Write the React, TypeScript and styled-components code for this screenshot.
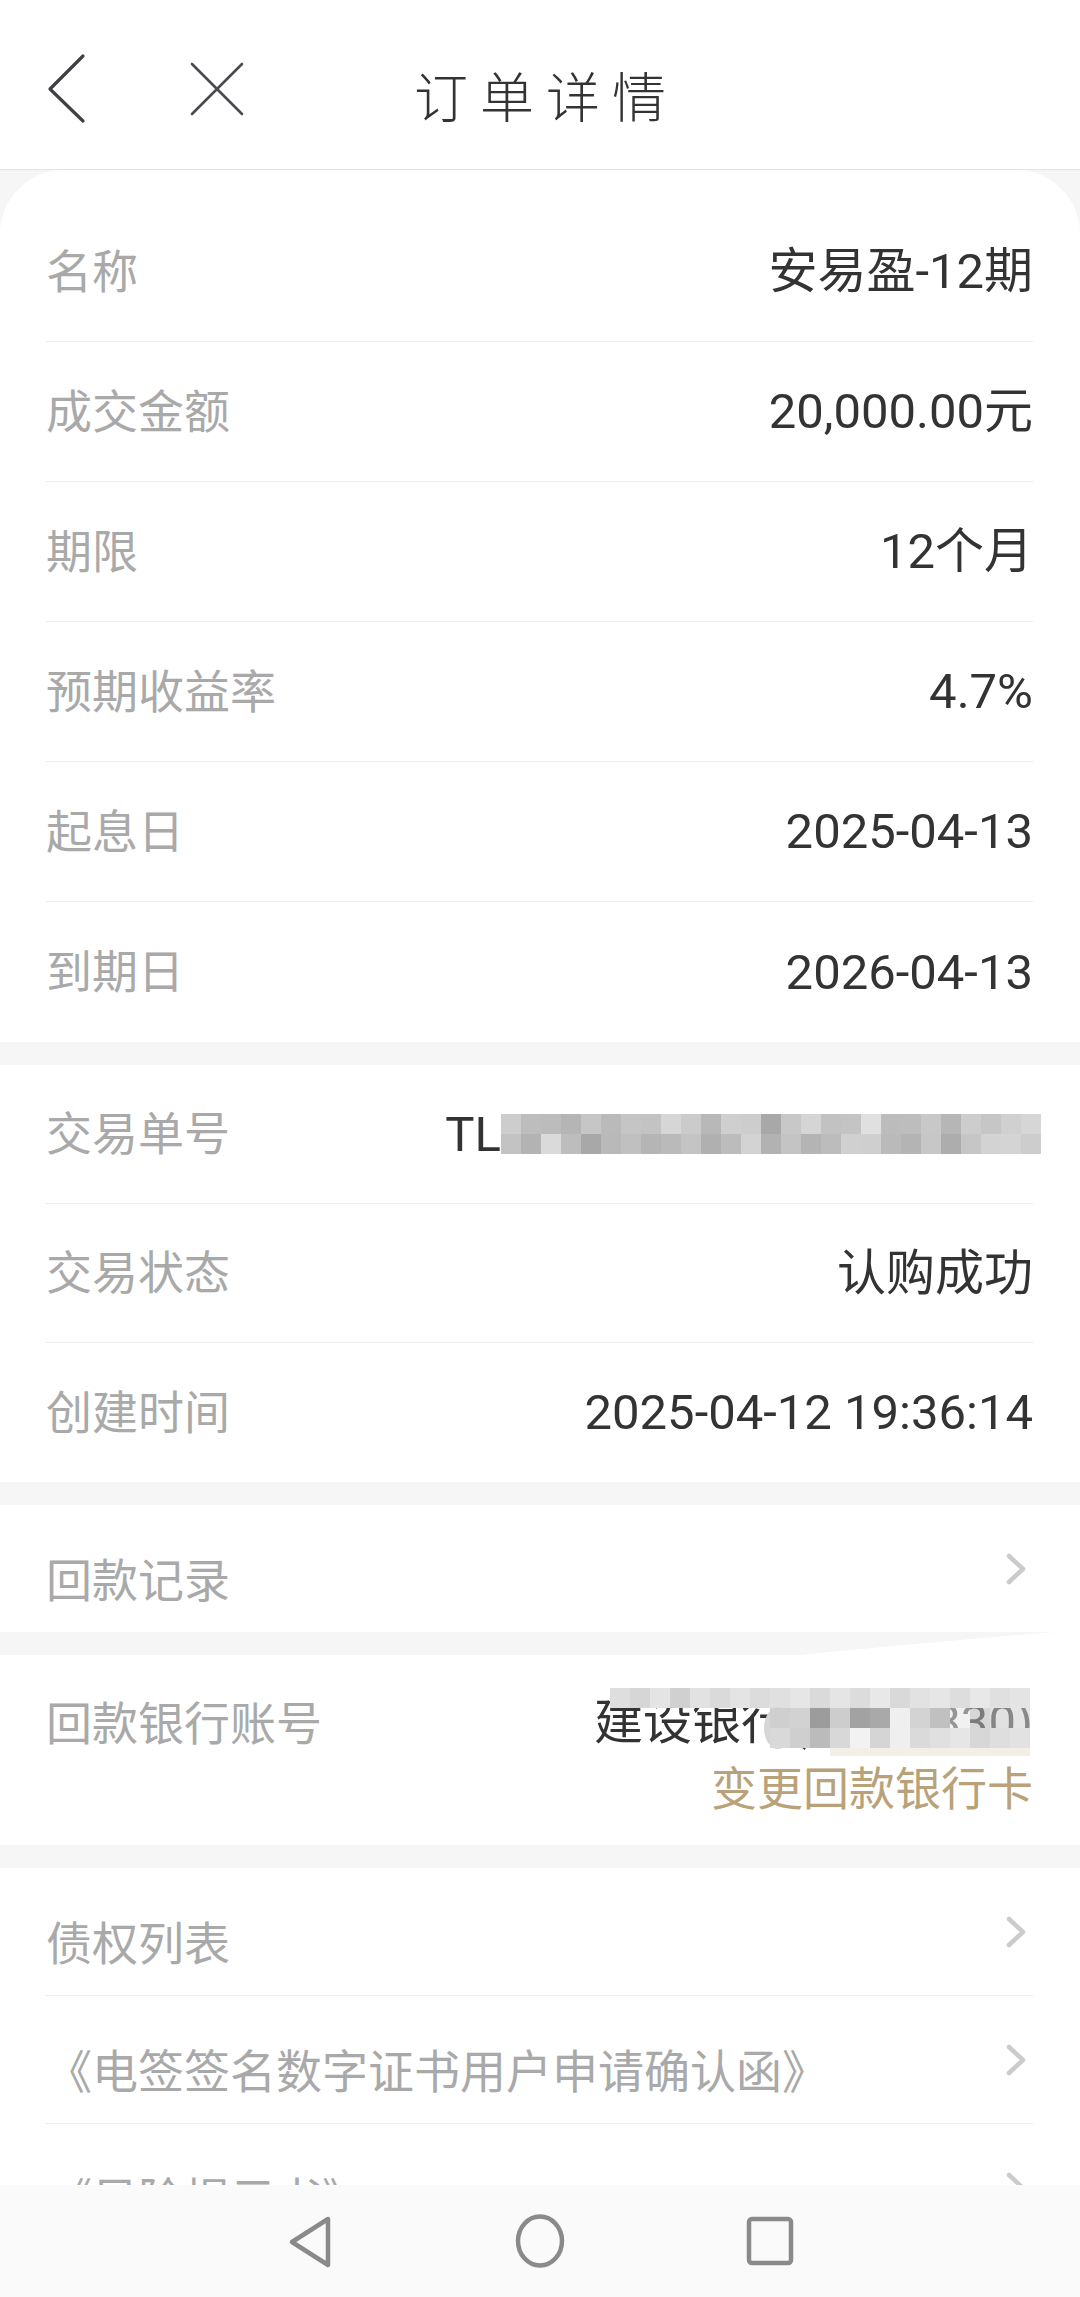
import React from 'react';
import styled, { createGlobalStyle } from 'styled-components';

const GlobalStyle = createGlobalStyle`
	html, body {
		margin: 0;
		padding: 0;
		background: #f6f6f6;
	}
	body {
		font-family: 'Noto Sans CJK SC', sans-serif;
	}
	* {
		box-sizing: border-box;
	}
`;

const Screen = styled.div`
	width: 1080px;
	height: 2297px;
	display: flex;
	flex-direction: column;
	overflow: hidden;
	background: #f6f6f6;
`;

const Header = styled.header`
	flex: none;
	height: 170px;
	background: #fff;
	border-bottom: 1px solid #e3e3e3;
	display: grid;
	grid-template-columns: 1fr auto 1fr;
	align-items: center;
`;

const HeaderLeft = styled.div`
	display: flex;
	align-items: center;
	gap: 99px;
	padding-left: 46px;
`;

const Title = styled.h1`
	margin: 0 -12px 0 0;
	padding-top: 20px;
	font-size: 54px;
	font-weight: 300;
	letter-spacing: 12px;
	line-height: 1;
	color: #333;
`;

const Content = styled.main`
	flex: 1;
	min-height: 0;
	overflow: hidden;
	display: flex;
	flex-direction: column;
	gap: 23px;
`;

const Section = styled.section<{ $rounded?: boolean; $raised?: boolean }>`
	flex: none;
	position: ${(p) => (p.$raised ? 'relative' : 'static')};
	z-index: ${(p) => (p.$raised ? 1 : 'auto')};
	background: #fff;
	border-radius: ${(p) => (p.$rounded ? '64px 64px 0 0' : '0')};
	padding-top: ${(p) => (p.$rounded ? '32px' : '0')};
`;

const Row = styled.div<{ $h: number; $top?: boolean }>`
	margin: 0 47px 0 46px;
	height: ${(p) => p.$h}px;
	display: flex;
	align-items: ${(p) => (p.$top ? 'flex-start' : 'center')};
	justify-content: space-between;
	padding-top: ${(p) => (p.$top ? '37px' : '0')};
	border-bottom: 1px solid #ececec;

	&:last-child {
		border-bottom: none;
	}
`;

const Label = styled.span<{ $shift?: boolean; $tall?: boolean }>`
	font-size: 46px;
	line-height: ${(p) => (p.$tall ? '62px' : '1')};
	color: #a9a9a9;
	white-space: nowrap;
	padding-top: ${(p) => (p.$shift ? '24px' : '0')};
	padding-bottom: ${(p) => (p.$tall ? '0' : '8px')};
	margin-top: ${(p) => (p.$tall ? '-3px' : '0')};
`;

const Value = styled.span`
	display: flex;
	align-items: center;
	font-family: Roboto, 'Noto Sans CJK SC', sans-serif;
	font-size: 49px;
	line-height: 1;
	color: #333;
	white-space: nowrap;
`;

const Mosaic = styled.svg`
	display: block;
	flex: none;
	margin-right: -8px;
`;

const BankBlock = styled.div`
	display: flex;
	flex-direction: column;
	align-items: flex-end;
`;

const BankLine = styled.div`
	position: relative;
	height: 62px;
	font-family: Roboto, 'Noto Sans CJK SC', sans-serif;
	font-size: 49px;
	line-height: 62px;
	color: #333;
	white-space: nowrap;
`;

const BankCover = styled.svg`
	position: absolute;
	top: -62px;
	right: -47px;
`;

const ChangeLink = styled.a`
	font-size: 46px;
	line-height: 62px;
	color: #b9a27a;
	text-decoration: none;
`;

const NavBar = styled.nav`
	flex: none;
	height: 112px;
	background: #fafafa;
	display: flex;
	align-items: center;
	justify-content: center;
	gap: 170px;
`;

const NavIcon = styled.svg`
	display: block;
	width: 60px;
	height: 64px;
	fill: none;
	stroke: #8a8a8a;
	stroke-width: 4.5;
	stroke-linejoin: round;
`;

const ChevronIcon = styled.svg`
	flex: none;
	margin-right: 5px;
`;

const Chevron = () => (
	<ChevronIcon width="24" height="36" viewBox="0 0 24 36">
		<polyline
			points="5,5 19,18 5,31"
			fill="none"
			stroke="#cbcbcb"
			strokeWidth="4.5"
			strokeLinecap="round"
			strokeLinejoin="round"
		/>
	</ChevronIcon>
);

const orderRows = [
	['名称', '安易盈-12期'],
	['成交金额', '20,000.00元'],
	['期限', '12个月'],
	['预期收益率', '4.7%'],
	['起息日', '2025-04-13'],
	['到期日', '2026-04-13'],
];

const tradeTop = [
	'#cdcdcd', '#bdbdbd', '#bcbcbc', '#b5b5b5', '#c6c6c6', '#bababa', '#c5c5c5', '#c3c3c3', '#d6d6d6',
	'#cbcbcb', '#b8b8b8', '#cfcfcf', '#cdcdcd', '#a8a8a8', '#c8c8c8', '#d5d5d5', '#c2c2c2', '#c4c4c4',
	'#e0e0e0', '#bcbcbc', '#bdbdbd', '#c8c8c8', '#b6b6b6', '#cdcdcd', '#c6c6c6', '#d0d0d0', '#d6d6d6',
];
const tradeBottom = [
	'#c3c3c3', '#b3b3b3', '#dadada', '#bdbdbd', '#a8a8a8', '#b9b9b9', '#c0c0c0', '#b5b5b5', '#bababa',
	'#c4c4c4', '#b0b0b0', '#bcbcbc', '#d3d3d3', '#b2b2b2', '#c4c4c4', '#b4b4b4', '#bcbcbc', '#d0d0d0',
	'#cfcfcf', '#bababa', '#b4b4b4', '#c7c7c7', '#adadad', '#c6c6c6', '#d3d3d3', '#d4d4d4', '#cdcdcd',
];

const bankA = [
	'#dedede', '#d6d6d6', '#e4e4e4', '#d0d0d0', '#e2e2e2', '#dadada', '#e4e4e4', '#dcdcdc', '#e0e0e0', '#e6e6e6',
	'#dadada', '#e5e5e5', '#dcdcdc', '#e8e8e8', '#d9d9d9', '#e2e2e2', '#e6e6e6', '#dddddd', '#e8e8e8', '#e0e0e0',
	'#e4e4e4',
];
const bankB = [
	'#cfcfcf', '#d2d2d2', '#9c9c9c', '#cdcdcd', '#a2a2a2', '#a9a9a9', '#efefef', '#d3d3d3', '#c0c0c0', '#e6e6e6',
	'#b6b6b6', '#c8c8c8', '#d0d0d0',
];
const bankC = [
	'#d9d9d9', '#cfcfcf', '#bbbbbb', '#d8d8d8', '#f2f2f2', '#d5d5d5', '#efefef', '#dadada', '#e0e0e0', '#e6e6e6',
	'#d7d7d7', '#dedede', '#e2e2e2',
];

const TradeMosaic = () => (
	<Mosaic width="540" height="40" viewBox="0 0 540 40">
		{tradeTop.map((c, i) => (
			<rect key={`t${i}`} x={i * 20} y={0} width={20} height={20} fill={c} />
		))}
		{tradeBottom.map((c, i) => (
			<rect key={`b${i}`} x={i * 20} y={20} width={20} height={20} fill={c} />
		))}
	</Mosaic>
);

// cover sits from page x 600 to 1080, page y 1630 to 1760
const BankMosaic = () => (
	<BankCover width="480" height="130" viewBox="0 0 480 130">
		<path d="M200 25 Q330 12 480 0 L480 40 L200 40 Z" fill="#fff" />
		{bankA.map((c, i) => (
			<rect key={`a${i}`} x={10 + i * 20} y={58} width={20} height={20} fill={c} />
		))}
		<ellipse cx={178} cy={98} rx={14} ry={21} fill="#d6d6d6" />
		{bankB.map((c, i) => (
			<rect
				key={`b${i}`}
				x={170 + i * 20}
				y={78}
				width={20}
				height={20}
				fill={c}
				opacity={i >= 9 ? 0.55 : 1}
			/>
		))}
		{bankC.map((c, i) => (
			<rect key={`c${i}`} x={170 + i * 20} y={98} width={20} height={20} fill={c} />
		))}
		<rect x={230} y={118} width={200} height={8} fill="#f4efe6" />
	</BankCover>
);

export default function App() {
	return (
		<>
			<GlobalStyle />
			<Screen>
				<Header>
					<HeaderLeft>
						<svg width="44" height="80" viewBox="0 0 44 80">
							<polyline
								points="37,11 4,44 37,76"
								fill="none"
								stroke="#3f3f44"
								strokeWidth="3.2"
								strokeLinecap="round"
								strokeLinejoin="round"
							/>
						</svg>
						<svg width="60" height="64" viewBox="0 0 60 64">
							<path d="M3 11 L53 61 M53 11 L3 61" stroke="#4a4a50" strokeWidth="2.6" strokeLinecap="round" />
						</svg>
					</HeaderLeft>
					<Title>订单详情</Title>
					<div />
				</Header>

				<Content>
					<Section $rounded>
						{orderRows.map(([label, value]) => (
							<Row key={label} $h={140}>
								<Label>{label}</Label>
								<Value>{value}</Value>
							</Row>
						))}
					</Section>

					<Section>
						<Row $h={139}>
							<Label>交易单号</Label>
							<Value>
								TL
								<TradeMosaic />
							</Value>
						</Row>
						<Row $h={139}>
							<Label>交易状态</Label>
							<Value>认购成功</Value>
						</Row>
						<Row $h={139}>
							<Label>创建时间</Label>
							<Value>2025-04-12 19:36:14</Value>
						</Row>
					</Section>

					<Section>
						<Row $h={127}>
							<Label $shift>回款记录</Label>
							<Chevron />
						</Row>
					</Section>

					<Section $raised>
						<Row $h={190} $top>
							<Label $tall>回款银行账号</Label>
							<BankBlock>
								<BankLine>
									建设银行(******830)
									<BankMosaic />
								</BankLine>
								<ChangeLink href="#">变更回款银行卡</ChangeLink>
							</BankBlock>
						</Row>
					</Section>

					<Section>
						<Row $h={128}>
							<Label $shift>债权列表</Label>
							<Chevron />
						</Row>
						<Row $h={128}>
							<Label $shift>《电签签名数字证书用户申请确认函》</Label>
							<Chevron />
						</Row>
						<Row $h={128}>
							<Label $shift>《风险揭示书》</Label>
							<Chevron />
						</Row>
					</Section>
				</Content>

				<NavBar>
					<NavIcon viewBox="0 0 60 64">
						<path d="M12 33 L48 10 L48 56 Z" />
					</NavIcon>
					<NavIcon viewBox="0 0 60 64">
						<ellipse cx="30" cy="32" rx="22" ry="24.5" />
					</NavIcon>
					<NavIcon viewBox="0 0 60 64">
						<rect x="9" y="10" width="42" height="44" rx="3" />
					</NavIcon>
				</NavBar>
			</Screen>
		</>
	);
}
